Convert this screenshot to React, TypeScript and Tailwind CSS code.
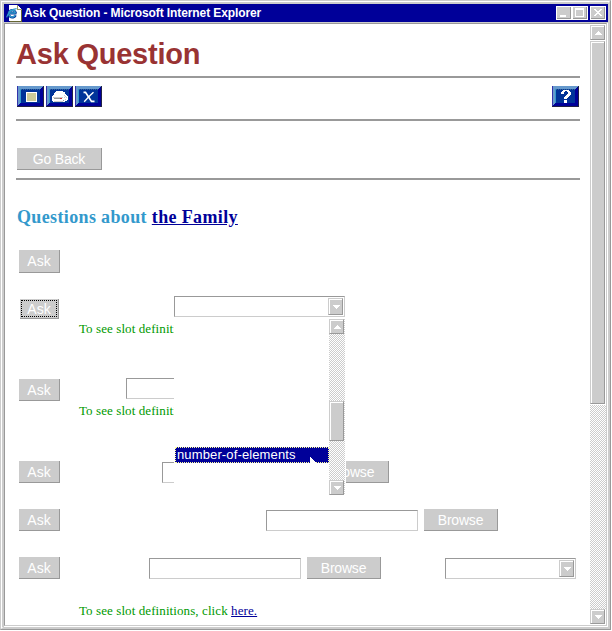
import React from "react";

const sans = "font-['Liberation_Sans',Arial,sans-serif]";
const serif = "font-['Liberation_Serif','Times_New_Roman',serif]";
const dither = "bg-[conic-gradient(#ccc_25%,#fff_0_50%,#ccc_0_75%,#fff_0)] bg-[length:2px_2px]";

function Rule({ className = "" }: { className?: string }) {
  return <div className={`h-[2px] w-[564px] shrink-0 bg-[#999] ${className}`} />;
}

function Arrow({ up = false }: { up?: boolean }) {
  return (
    <svg width="7" height="4" viewBox="0 0 7 4" shapeRendering="crispEdges" fill="#fff" className={up ? "rotate-180" : ""}>
      <path d="M0 0h7v1H0zM1 1h5v1H1zM2 2h3v1H2zM3 3h1v1H3z" />
    </svg>
  );
}

function Bevel({ className = "", children }: { className?: string; children?: React.ReactNode }) {
  return (
    <div className={`shrink-0 border border-[#ccc] border-r-[#999] border-b-[#999] ${className}`}>
      <div className="flex h-full w-full items-center justify-center border-t border-l border-white bg-[#ccc]">{children}</div>
    </div>
  );
}

function GreyButton({ label, className = "" }: { label: string; className?: string }) {
  return (
    <button
      className={`flex shrink-0 items-center justify-center border-r border-b border-[#999] bg-[#ccc] text-[14px] leading-none whitespace-nowrap text-white ${sans} ${className}`}
    >
      {label}
    </button>
  );
}

function Field({ className = "", children }: { className?: string; children?: React.ReactNode }) {
  return (
    <div className={`flex h-[21px] shrink-0 border border-[#ccc] border-t-[#999] border-l-[#999] bg-white ${className}`}>
      {children}
    </div>
  );
}

function SelectArrow() {
  return (
    <Bevel className="mt-px mr-px ml-auto h-[17px] w-[15px]">
      <Arrow />
    </Bevel>
  );
}

function Row({ className = "", children }: { className?: string; children: React.ReactNode }) {
  return <div className={`flex w-[570px] shrink-0 items-end ${className}`}>{children}</div>;
}

function Hint({ className = "" }: { className?: string }) {
  return (
    <p className={`ml-[62px] h-4 shrink-0 text-[13px] leading-4 tracking-[0.09px] whitespace-nowrap text-[#009900] ${serif} ${className}`}>
      To see slot definitions, click{" "}
      <a className="text-[#000099] underline" href="#here">here.</a>
    </p>
  );
}

function BlueButton({ children }: { children: React.ReactNode }) {
  return (
    <svg width="27" height="21" viewBox="0 0 27 21" shapeRendering="crispEdges" className="shrink-0">
      <path fill="#222244" d="M0 0h27v21H0z" />
      <path fill="#3333aa" d="M0 0h1v20H0z" />
      <path fill="#6699cc" d="M1 0h25v1h-1v1h-1v1H4v15H3v1H2v1H1z" />
      <path fill="#3399cc" d="M3 3h1v15H3z" />
      <path fill="#000099" d="M25 1h1v19H1v-1h1v-1h1v-1h20V3h1V2h1z" />
      <path fill="#003399" d="M4 3h19v14H4z" />
      <path fill="#336699" d="M4 3h1v1H4zM6 3h1v1H6zM8 3h1v1H8zM10 3h1v1h-1zM12 3h1v1h-1zM14 3h1v1h-1zM16 3h1v1h-1zM18 3h1v1h-1zM20 3h1v1h-1zM22 3h1v1h-1z" />
      {children}
    </svg>
  );
}

function Toolbar() {
  return (
    <div className="mt-2 ml-px flex h-[21px] w-[562px] shrink-0 gap-[2px]">
      <BlueButton>
        <path fill="#fff" d="M9 6h11v10H9z" />
        <path fill="#cccc99" d="M10 7h9v8h-9z" />
      </BlueButton>
      <BlueButton>
        <path fill="#fff" d="M10 5h7v1h2v2h1v1h1v1h1v4h-1v1h-2v1H7v-1H6v-5h1V9h1V7h1V6h1z" />
        <path fill="#ccc" d="M7 11h10v1H7zM8 15h9v1H8zM18 9h1v1h-1zM19 10h1v1h-1zM18 11h1v1h-1zM20 11h1v1h-1zM19 13h1v1h-1z" />
        <path fill="#999" d="M8 12h6v1H8zM17 14h1v1h-1z" />
        <path fill="#cc3333" d="M14 12h2v1h-2z" />
      </BlueButton>
      <BlueButton>
        <g fill="none" stroke="#fff" shapeRendering="auto">
          <path strokeWidth="1.7" d="M8.5 6.4h2l6 9h3" />
          <path strokeWidth="1.3" d="M18.5 6.2L15 9.5L9.2 15.8" />
        </g>
      </BlueButton>
      <div className="ml-auto flex">
        <BlueButton>
          <path fill="#fff" d="M11 4h6v1h1v1h1v3h-1v1h-1v1h-1v1h-1v1h-3v-2h1v-1h1V9h1V8h1V6h-1V5h-2v1h-1v2H9V6h1V5h1zM12 14h3v3h-3z" />
        </BlueButton>
      </div>
    </div>
  );
}

function PageIcon() {
  return (
    <svg width="17" height="17" viewBox="0 0 17 17" shapeRendering="crispEdges" className="ml-[2px] mt-px shrink-0">
      <path fill="#666633" d="M14 4h2v13H4v-1h10z" />
      <path fill="#fff" d="M3 0h9v1h1v1h1v1h1v13H3z" />
      <path fill="#999966" d="M11 0h1v4h4v1h-5z" />
      <g fill="none" shapeRendering="auto">
        <path stroke="#003399" strokeWidth="2.4" d="M9.6 10.2A3.6 3.6 0 1 1 9.6 7.4L9.4 8.3H3.2" />
        <path stroke="#3399cc" strokeWidth="1.5" d="M9.2 10A3.4 3.4 0 1 1 9.2 7.2L9 8.1H3.2" />
        <path stroke="#3399cc" strokeWidth="1.1" d="M.6 12.3C1.8 8 6 3.6 10.6 3.6" />
      </g>
    </svg>
  );
}

function CaptionButton({ kind }: { kind: "min" | "max" | "close" }) {
  return (
    <svg width="16" height="14" viewBox="0 0 16 14" shapeRendering="crispEdges">
      <path fill="#fff" d="M0 0h16v14H0z" />
      <path fill="#999" d="M1 1h14v12H1z" />
      <path fill="#ccc" d="M1 1h13v11H1z" />
      {kind === "min" && <path fill="#fff" d="M4 9h6v2H4z" />}
      {kind === "max" && <path fill="#fff" fillRule="evenodd" d="M3 2h9v9H3zM4 4h7v6H4z" />}
      {kind === "close" && (
        <path fill="#fff" d="M4 3h2v1H4zM5 4h2v1H5zM6 5h4v1H6zM7 6h2v1H7zM6 7h4v1H6zM5 8h2v1H5zM4 9h2v1H4zM10 3h2v1h-2zM9 4h2v1H9zM9 8h2v1H9zM10 9h2v1h-2z" />
      )}
    </svg>
  );
}

function DropdownList() {
  return (
    <div className="absolute top-[21px] -left-px flex h-[178px] w-[172px] bg-white pt-px">
      <div className="ml-px w-[154px] shrink-0 pt-[128px]">
        <div className={`relative h-4 w-[154px] border border-dotted border-[#ffff99] bg-[#000099] pl-px text-[13px] leading-[14px] tracking-[0.13px] whitespace-nowrap text-white ${sans}`}>
          number-of-elements
          <svg width="7" height="6" viewBox="0 0 7 6" shapeRendering="crispEdges" fill="#fff" className="absolute right-[11px] -bottom-px">
            <path d="M0 0h1v1h1v1h1v1h1v1h1v1h1v1H0z" />
          </svg>
        </div>
      </div>
      <div className={`flex h-[176px] w-4 shrink-0 flex-col ${dither}`}>
        <Bevel className="h-[15px] w-[15px]"><Arrow up /></Bevel>
        <Bevel className="mt-[67px] h-10 w-[15px]" />
        <Bevel className="mt-auto h-[15px] w-[15px]"><Arrow /></Bevel>
      </div>
    </div>
  );
}

export default function App() {
  return (
    <div className="h-[631px] w-[612px] overflow-hidden bg-white pr-px pb-px">
      <div className="h-[630px] w-[611px] border border-[#ccc] border-r-[#999] border-b-[#999]">
        <div className="flex h-full w-full flex-col border-2 border-[#ccc] border-t-white border-l-white">
          <div className="-mt-px -ml-px flex min-h-0 flex-1 flex-col border-t-2 border-l-2 border-[#ccc]">
            <div className="flex h-[18px] w-full shrink-0 bg-[#000099]">
              <PageIcon />
              <span className={`ml-px text-[12px] leading-[18px] font-bold tracking-[-0.1px] whitespace-nowrap text-white ${sans}`}>
                Ask Question - Microsoft Internet Explorer
              </span>
              <div className="mt-[2px] mr-[2px] ml-auto flex">
                <CaptionButton kind="min" />
                <CaptionButton kind="max" />
                <span className="w-[2px]" />
                <CaptionButton kind="close" />
              </div>
            </div>
            <div className="h-px shrink-0 bg-[#ccc]" />
            <div className="mr-px mb-px flex h-[603px] w-[603px] shrink-0 border border-[#ccc] border-t-[#999] border-l-[#999]">
              <main className="flex w-[585px] shrink-0 flex-col pl-[11px]">
                <h1 className={`mt-[12px] h-[36px] shrink-0 text-[29px] leading-[36px] font-bold tracking-[-0.22px] whitespace-nowrap text-[#993333] ${sans}`}>
                  Ask Question
                </h1>
                <Rule className="mt-[4px]" />
                <Toolbar />
                <Rule className="mt-[12px]" />
                <GreyButton label="Go Back" className="mt-[27px] ml-px h-[22px] w-[85px] tracking-[-0.2px]" />
                <Rule className="mt-[8px]" />
                <h2 className={`mt-[26px] ml-px h-[22px] shrink-0 text-[18px] leading-[22px] font-bold tracking-[0.36px] whitespace-nowrap text-[#3399cc] ${serif}`}>
                  Questions about <a className="text-[#000099] underline" href="#family">the Family</a>
                </h2>
                <div className="flex flex-col pl-px">
                  <Row className="mt-[22px] h-[23px]">
                    <GreyButton label="Ask" className="ml-[2px] h-[23px] w-[41px]" />
                  </Row>
                  <Row className="mt-[23px] h-[23px] items-start!">
                    <div className="mt-[3px] ml-[3px] flex h-[20px] w-[39px] border-r border-b border-[#999] bg-[#ccc] p-px">
                      <button className={`flex h-[17px] w-[36px] items-center justify-center border border-dotted border-black text-[14px] leading-none text-white ${sans}`}>Ask</button>
                    </div>
                    <Field className="relative z-10 ml-[115px] w-[171px]">
                      <SelectArrow />
                      <DropdownList />
                    </Field>
                  </Row>
                  <Hint className="mt-[2px]" />
                  <Row className="mt-[42px] h-[22px] items-start!">
                    <GreyButton label="Ask" className="ml-[2px] h-[22px] w-[41px]" />
                    <Field className="-mt-px ml-[66px] w-[152px]" />
                  </Row>
                  <Hint className="mt-[2px]" />
                  <Row className="mt-[42px] h-[22px]">
                    <GreyButton label="Ask" className="ml-[2px] h-[22px] w-[41px]" />
                    <Field className="ml-[102px] w-[147px]" />
                    <GreyButton label="Browse" className="ml-[6px] h-[22px] w-[74px] tracking-[-0.2px]" />
                  </Row>
                  <Row className="mt-[26px] h-[22px]">
                    <GreyButton label="Ask" className="ml-[2px] h-[22px] w-[41px]" />
                    <Field className="ml-[206px] w-[152px]" />
                    <GreyButton label="Browse" className="ml-[6px] h-[22px] w-[74px] tracking-[-0.2px]" />
                  </Row>
                  <Row className="mt-[26px] h-[22px]">
                    <GreyButton label="Ask" className="ml-[2px] h-[22px] w-[41px]" />
                    <Field className="ml-[89px] w-[152px]" />
                    <GreyButton label="Browse" className="ml-[6px] h-[22px] w-[74px] tracking-[-0.2px]" />
                    <Field className="ml-[64px] w-[131px]">
                      <SelectArrow />
                    </Field>
                  </Row>
                  <Hint className="mt-[24px]" />
                </div>
              </main>
              <div className={`flex w-4 shrink-0 flex-col ${dither}`}>
                <div className="h-[17px] shrink-0 bg-white pt-px"><Bevel className="h-[15px] w-[15px]"><Arrow up /></Bevel></div>
                <div className="h-[364px] shrink-0 bg-white"><Bevel className="h-[363px] w-[15px]" /></div>
                <div className="mt-auto h-4 shrink-0 bg-white"><Bevel className="h-[15px] w-[15px]"><Arrow /></Bevel></div>
              </div>
            </div>
          </div>
        </div>
      </div>
    </div>
  );
}
